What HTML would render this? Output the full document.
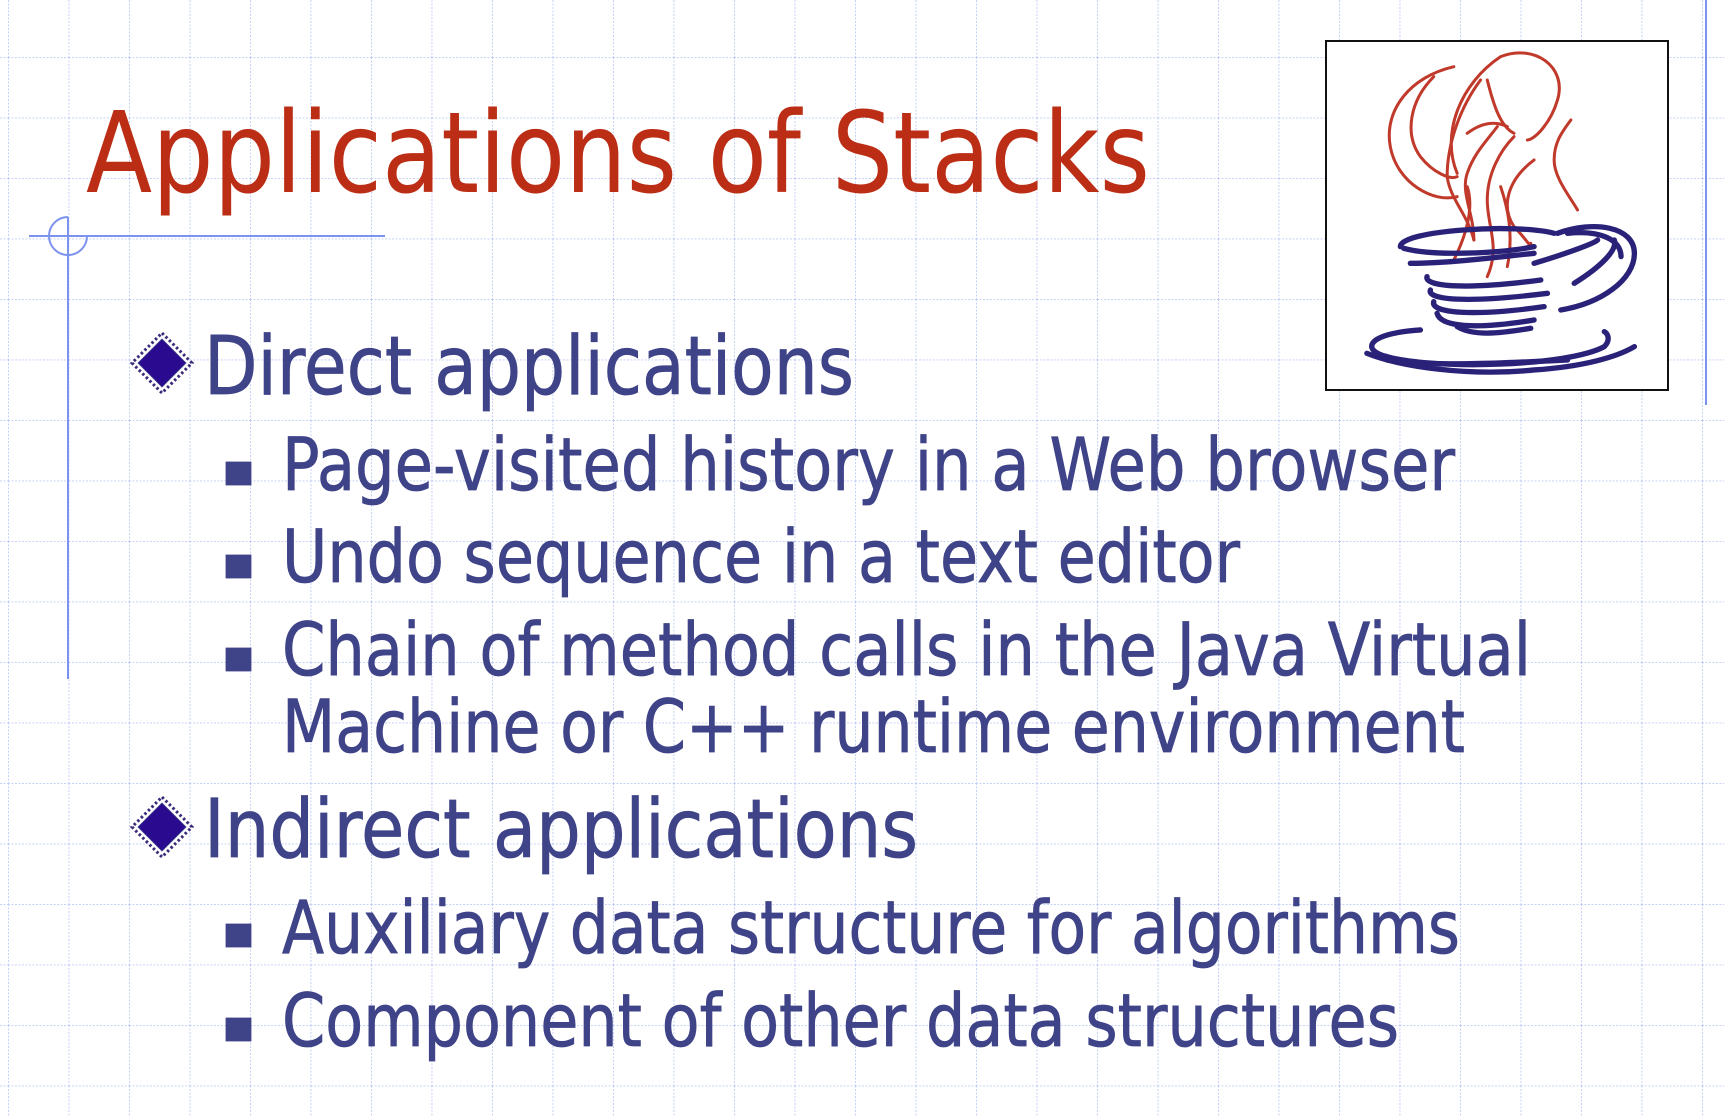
<!DOCTYPE html>
<html><head><meta charset="utf-8"><style>
html,body{margin:0;padding:0;background:#fff;}
svg{display:block;}
</style></head><body>
<svg width="1724" height="1117" viewBox="0 0 1724 1117" xmlns="http://www.w3.org/2000/svg">
<defs>
<pattern id="g" x="8" y="57" width="60.5" height="60.5" patternUnits="userSpaceOnUse">
<line x1="0" y1="0" x2="0" y2="60.5" stroke="#bfcdf3" stroke-width="1.8" stroke-dasharray="2 1.5"/>
<line x1="0" y1="0" x2="60.5" y2="0" stroke="#bfcdf3" stroke-width="1.8" stroke-dasharray="2 1.5"/>
</pattern>
<g id="dia">
<polygon points="0,-30 30,0 0,30 -30,0" fill="#fff" stroke="#3a2a7a" stroke-width="3" stroke-dasharray="2.5 2.5"/>
<polygon points="0,-24 24,0 0,24 -24,0" fill="#2a0a8e"/>
</g>
</defs>
<rect width="1724" height="1117" fill="#fff"/>
<rect width="1724" height="1117" fill="url(#g)"/>
<line x1="29" y1="236" x2="385" y2="236" stroke="#7b93ee" stroke-width="2"/>
<line x1="68" y1="217" x2="68" y2="679" stroke="#7b93ee" stroke-width="2"/>
<path d="M68,217 A19,19 0 1 0 87,236" fill="none" stroke="#7b93ee" stroke-width="2"/>
<line x1="1706" y1="0" x2="1706" y2="405" stroke="#7b93ee" stroke-width="2"/>
<text x="86" y="192" font-family="DejaVu Sans, Liberation Sans, sans-serif" font-size="112" fill="#bb2e15" textLength="1064" lengthAdjust="spacingAndGlyphs">Applications of Stacks</text>
<g font-family="DejaVu Sans, Liberation Sans, sans-serif" fill="#3f4388" stroke="#3f4388" stroke-width="0.8">
<use href="#dia" x="162" y="363"/>
<text x="204" y="394" font-size="81" textLength="650" lengthAdjust="spacingAndGlyphs">Direct applications</text>
<rect x="226" y="462" width="25" height="23"/>
<text x="282" y="490" font-size="73" textLength="1173" lengthAdjust="spacingAndGlyphs">Page-visited history in a Web browser</text>
<rect x="226" y="555" width="25" height="23"/>
<text x="282" y="582" font-size="73" textLength="958" lengthAdjust="spacingAndGlyphs">Undo sequence in a text editor</text>
<rect x="226" y="648" width="25" height="23"/>
<text x="282" y="675" font-size="73" textLength="1249" lengthAdjust="spacingAndGlyphs">Chain of method calls in the Java Virtual</text>
<text x="282" y="752" font-size="73" textLength="1183" lengthAdjust="spacingAndGlyphs">Machine or C++ runtime environment</text>
<use href="#dia" x="162" y="827"/>
<text x="204" y="857" font-size="81" textLength="714" lengthAdjust="spacingAndGlyphs">Indirect applications</text>
<rect x="226" y="924" width="25" height="23"/>
<text x="282" y="953" font-size="73" textLength="1178" lengthAdjust="spacingAndGlyphs">Auxiliary data structure for algorithms</text>
<rect x="226" y="1018" width="25" height="23"/>
<text x="282" y="1046" font-size="73" textLength="1117" lengthAdjust="spacingAndGlyphs">Component of other data structures</text>
</g>
<rect x="1326" y="41" width="342" height="349" fill="#fff" stroke="#111" stroke-width="2"/>
<g transform="translate(1300 0) scale(0.3344 0.3333)" fill="none" stroke-linecap="round">
<g stroke="#c0392b" stroke-width="9">
<path d="M460,200 C330,230 250,330 270,440 C290,550 400,610 470,590"/>
<path d="M540,240 C480,320 440,430 440,530 C450,600 500,640 520,720"/>
<path d="M470,520 C420,400 480,250 600,170 C700,130 800,200 770,300 C750,370 700,420 680,420"/>
<path d="M590,380 C560,420 520,460 500,520 C480,580 520,640 520,720"/>
<path d="M640,410 C600,450 560,520 560,600 C560,680 600,740 560,830"/>
<path d="M700,480 C620,540 600,620 640,680 C680,720 700,760 690,730"/>
<path d="M810,360 C780,400 760,430 760,480 C760,530 800,580 830,630"/>
<path d="M600,560 C620,620 640,700 620,800"/>
<path d="M500,560 C520,620 500,700 460,780"/>
<path d="M560,240 C580,320 600,380 640,400"/>
<path d="M400,230 C330,300 310,400 360,470 C400,520 450,540 470,530"/>
<path d="M500,400 C540,370 580,360 620,380"/>
</g>
<g stroke="#2a2278" stroke-width="16">
<path d="M300,740 C300,690 650,670 760,700"/>
<path d="M310,745 C400,770 600,760 700,740"/>
<path d="M330,790 C450,790 600,770 700,760"/>
<path d="M380,830 C370,860 500,870 720,840"/>
<path d="M390,870 C380,900 500,910 740,880"/>
<path d="M400,905 C390,940 520,950 730,920"/>
<path d="M410,940 C420,980 520,990 700,960"/>
<path d="M470,980 C520,1010 600,1000 690,985"/>
<path d="M770,700 C880,660 1000,680 1000,760 C1000,840 900,910 780,930"/>
<path d="M700,790 C800,760 880,730 890,720"/>
<path d="M820,850 C900,800 950,750 940,720"/>
<path d="M800,700 C900,690 960,720 960,770"/>
<path d="M360,990 C200,1000 180,1050 260,1070 C400,1110 800,1100 910,1040 C930,1020 920,1000 910,995"/>
<path d="M200,1060 C300,1100 500,1130 700,1110 C850,1100 950,1070 1000,1040"/>
<path d="M260,1080 C400,1100 600,1090 800,1080"/>
</g>
</g>
</svg>
</body></html>
